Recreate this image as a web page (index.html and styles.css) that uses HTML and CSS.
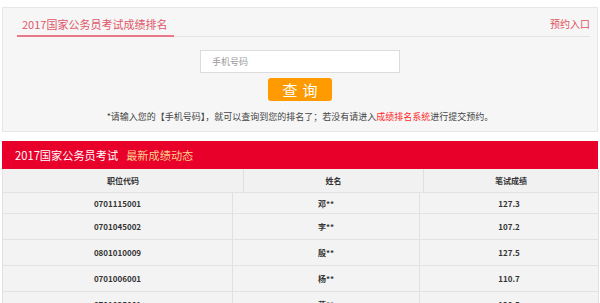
FILE: index.html
```html
<!DOCTYPE html>
<html lang="zh-CN">
<head>
<meta charset="utf-8">
<title>2017国家公务员考试成绩排名</title>
<link rel="stylesheet" href="styles.css">
</head>
<body>
<div class="panel">
  <div class="panel-head">
    <div class="tab">2017国家公务员考试成绩排名</div>
    <a class="entry" href="#">预约入口</a>
  </div>
  <div class="query">
    <input class="phone" type="text" placeholder="手机号码">
    <button class="btn" type="button">查询</button>
    <p class="tip">*请输入您的【手机号码】，就可以查询到您的排名了；若没有请进入<a class="sys" href="#">成绩排名系统</a>进行提交预约。</p>
  </div>
</div>

<div class="bar">
  <span class="bar-title">2017国家公务员考试</span>
  <span class="bar-sub">最新成绩动态</span>
</div>

<div class="thead">
  <div class="th">职位代码</div>
  <div class="th">姓名</div>
  <div class="th">笔试成绩</div>
</div>
<div class="tbody">
  <div class="td first">0701115001</div><div class="td name first">邓**</div><div class="td first">127.3</div>
  <div class="td">0701045002</div><div class="td name">李**</div><div class="td">107.2</div>
  <div class="td">0801010009</div><div class="td name">殷**</div><div class="td">127.5</div>
  <div class="td">0701006001</div><div class="td name">杨**</div><div class="td">110.7</div>
  <div class="td">0701025001</div><div class="td name">蒋**</div><div class="td">120.5</div>
</div>
</body>
</html>
```

FILE: styles.css
```css
html, body {
  margin: 0;
  padding: 0;
  background: #fff;
  overflow: hidden;
  font-family: "Noto Sans CJK SC", "Liberation Sans", sans-serif;
}

.panel {
  margin: 7px 2px 0;
  height: 123px;
  border: 1px solid #e6e6e6;
  background: #f6f6f6;
}

.panel-head {
  display: flex;
  justify-content: space-between;
  align-items: flex-start;
  margin: 0 7px 0 14px;
  border-bottom: 1px solid #e4e4e4;
}

.tab {
  padding: 10px 7px 5px 5px;
  font-size: 11px;
  line-height: 12px;
  color: #e0566a;
  border-bottom: 2px solid #e9788a;
  margin-bottom: -1px;
}

.entry {
  padding-top: 10px;
  font-size: 10px;
  line-height: 12px;
  color: #e2505c;
  text-decoration: none;
}

.query {
  display: flex;
  flex-direction: column;
  align-items: center;
}

.phone {
  box-sizing: border-box;
  width: 200px;
  height: 23px;
  margin: 13px 0 0;
  padding: 0 0 0 11px;
  border: 1px solid #dcdcdc;
  background: #fff;
  font-family: inherit;
  font-size: 9px;
  color: #333;
  outline: none;
}

.phone::placeholder {
  color: #9a9a9a;
}

.btn {
  width: 64px;
  height: 23px;
  margin-top: 5px;
  padding: 0 0 0 5px;
  border: none;
  border-radius: 3px;
  background: #ff9a00;
  color: #fff;
  font-family: inherit;
  font-size: 15px;
  line-height: 23px;
  letter-spacing: 5px;
}

.tip {
  margin: 10px 0 0;
  font-size: 9px;
  line-height: 12px;
  color: #444;
}

.sys {
  color: #ff2a2a;
  text-decoration: none;
}

.bar {
  display: flex;
  align-items: center;
  gap: 8px;
  margin: 9px 2px 0;
  height: 28px;
  padding-left: 13px;
  background: #e8002a;
  font-size: 11.2px;
}

.bar-title {
  color: #fff;
}

.bar-sub {
  color: #ffd08c;
}

.thead,
.tbody {
  display: grid;
  margin: 0 2px;
  border-left: 1px solid #e0e0e0;
  background: #f3f3f3;
  font-size: 8px;
  font-weight: 700;
  color: #333;
}

.thead {
  grid-template-columns: 241px 180px 175px;
  background: #f1f1f1;
}

.tbody {
  grid-template-columns: 230px 187px 179px;
}

.th,
.td {
  display: flex;
  align-items: center;
  justify-content: center;
  border-right: 1px solid #e0e0e0;
  border-bottom: 1px solid #e2e2e2;
}

.th {
  height: 23px;
}

.td {
  height: 25px;
}

.td.first {
  height: 20px;
}

.td.name {
  justify-content: flex-start;
  padding-left: 85px;
}
```
